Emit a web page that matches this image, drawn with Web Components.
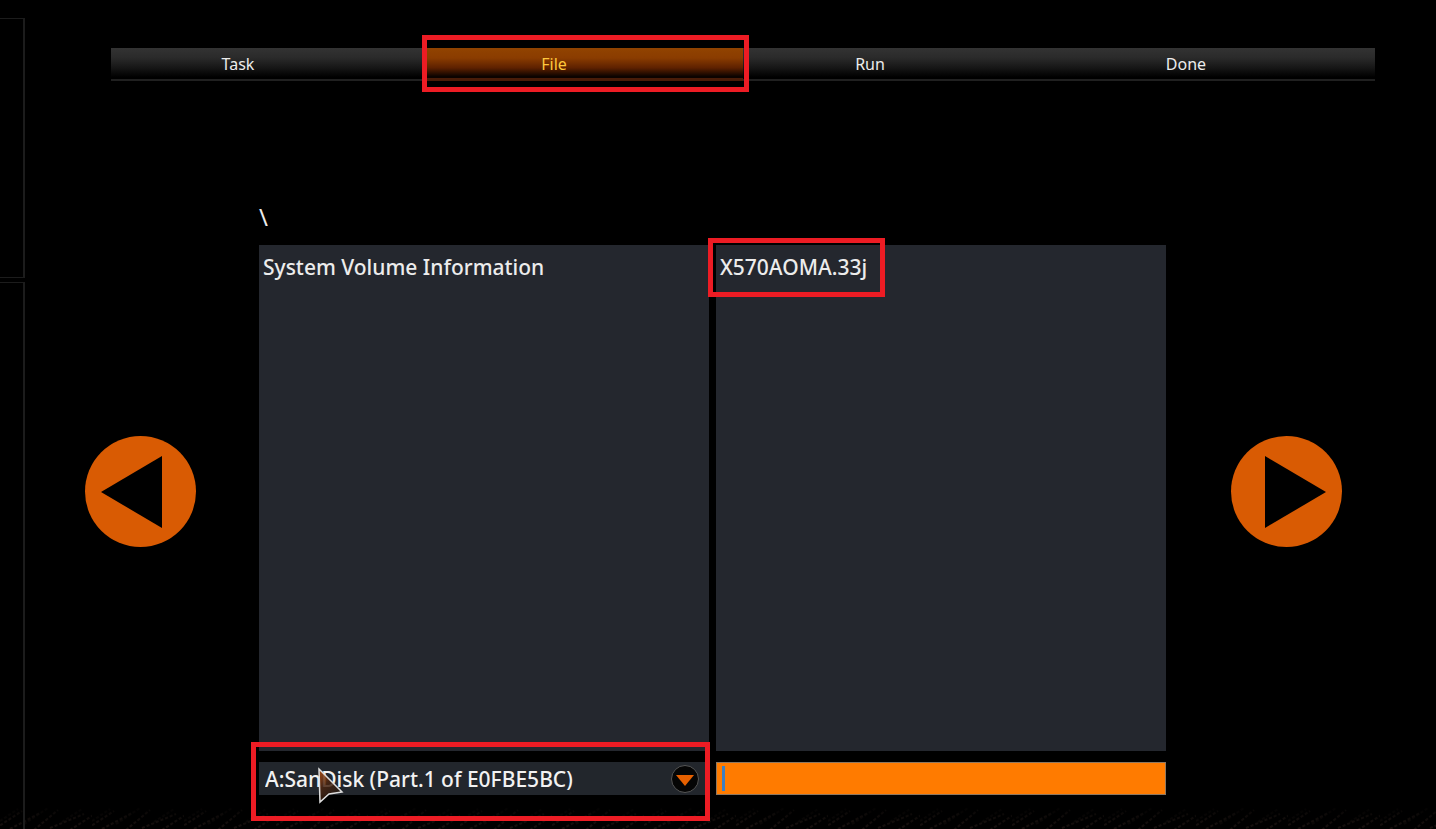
<!DOCTYPE html>
<html lang="en">
<head>
<meta charset="utf-8">
<meta name="viewport" content="width=device-width, initial-scale=1">
<title>Firmware update</title>
<style>
  html, body { margin: 0; background: #000; }
  body { font-family: "Noto Sans", "Open Sans", sans-serif; color: #ececec; }
</style>
</head>
<body>
<flash-page>
  <side-rail slot="rail"></side-rail>
  <step-bar slot="steps">
    <step-item>Task</step-item>
    <call-out style="--outset: -13px -6px -11px -5px"><step-item current>File</step-item></call-out>
    <step-item>Run</step-item>
    <step-item>Done</step-item>
  </step-bar>
  <round-button slot="prev" label="Previous step"></round-button>
  <file-browser>
    <span slot="path">\</span>
    <file-list slot="folders" label="Folders"><file-entry>System Volume Information</file-entry></file-list>
    <file-list slot="files" label="Files">
      <call-out style="--outset: -7px -14px -8px -8px"><file-entry>X570AOMA.33j</file-entry></call-out>
    </file-list>
    <call-out slot="drive" style="--outset: -20px -1px -26px -8px"><drive-select value="A:SanDisk (Part.1 of E0FBE5BC)"></drive-select></call-out>
    <name-field slot="name"></name-field>
  </file-browser>
  <round-button slot="next" label="Next step" forward></round-button>
</flash-page>

<script>
const define = (name, html, setup) => {
  const template = document.createElement('template');
  template.innerHTML = html;
  customElements.define(name, class extends HTMLElement {
    connectedCallback() {
      if (this.shadowRoot) return;
      this.attachShadow({ mode: 'open' }).append(template.content.cloneNode(true));
      if (setup) setup(this, this.shadowRoot);
    }
  });
};

define('flash-page', `
<style>
  :host { display: grid; grid-template-columns: 25px minmax(0, 1fr); min-height: 100vh; position: relative; isolation: isolate; overflow: hidden; }
  .texture { position: absolute; z-index: -1; left: 0; bottom: 0; width: 100%; height: 32px; }
  main { display: flex; flex-direction: column; }
  header { padding: 48px 61px 0 86px; }
  .stage { flex: 1; display: grid; grid-template-columns: 174px minmax(0, 1fr) 176px; align-items: center; margin-top: 107px; padding: 0 94px 34px 60px; }
  .body { align-self: stretch; display: grid; }
  .next { justify-self: end; }
</style>
<slot name="rail"></slot>
<svg class="texture" aria-hidden="true">
  <defs>
    <pattern id="mesh" width="92" height="32" patternUnits="userSpaceOnUse">
      <g fill="none" stroke="#3a2a24" stroke-width="2" stroke-dasharray="3 2" opacity=".5">
        <path d="M-4 31 22 14M10 32 40 16M34 33 58 13M50 31 84 17M70 33 98 15"/>
        <path d="M0 24 18 12M24 27 48 11M62 25 82 12" opacity=".5"/>
      </g>
    </pattern>
    <linearGradient id="rise" x2="0" y2="1"><stop stop-color="#000"/><stop offset="1" stop-color="#000" stop-opacity=".2"/></linearGradient>
  </defs>
  <rect width="100%" height="32" fill="url(#mesh)"/>
  <rect width="100%" height="32" fill="url(#rise)"/>
</svg>
<main>
  <header><slot name="steps"></slot></header>
  <div class="stage">
    <div><slot name="prev"></slot></div>
    <div class="body"><slot></slot></div>
    <div class="next"><slot name="next"></slot></div>
  </div>
</main>`);

define('side-rail', `
<style>
  :host { display: flex; flex-direction: column; gap: 4px; padding-top: 18px; }
  div { border: solid #1c1c1c; border-width: 1px 2px 1px 0; box-sizing: border-box; }
  .upper { height: 260px; }
  .lower { flex: 1; border-bottom: 0; }
</style>
<div class="upper"></div><div class="lower"></div>`);

define('step-bar', `
<style>
  :host { display: grid; grid-template-columns: repeat(4, minmax(0, 1fr)); background: linear-gradient(#333 0, #2a2a2a 30%, #161616 60%, #000 88%, #000 94%, #202020 94%); }
</style>
<slot></slot>`, el => el.setAttribute('role', 'list'));

define('step-item', `
<style>
  :host { display: block; box-sizing: border-box; height: 33px; padding-right: 62px; font-size: 16px; line-height: 33px; text-align: center; }
  :host([current]) { color: #ffc83c; background: linear-gradient(#914300 0, #8a3c00 30%, #5e2100 60%, #0c0300 86%, #0c0300 92%, #4a1c08 92%); }
</style>
<slot></slot>`, el => {
  el.setAttribute('role', 'listitem');
  if (el.hasAttribute('current')) el.setAttribute('aria-current', 'step');
});

define('call-out', `
<style>
  :host { display: block; position: relative; }
  .frame { position: absolute; z-index: 2; inset: var(--outset); border: 5px solid #ed1c24; pointer-events: none; }
</style>
<slot></slot><div class="frame"></div>`);

define('round-button', `
<style>
  :host { display: block; width: 111px; height: 111px; }
  button { display: block; width: 100%; height: 100%; padding: 0; border: 0; border-radius: 50%; background: none; cursor: pointer; }
  svg { display: block; width: 100%; height: 100%; }
  :host([forward]) svg { transform: scaleX(-1); }
</style>
<button type="button"><svg viewBox="0 0 111 111" aria-hidden="true"><circle cx="55.5" cy="55.5" r="55.5" fill="#d95b03"/><path d="M16 56 77 20V92Z" fill="#000"/></svg></button>`,
(el, root) => root.querySelector('button').setAttribute('aria-label', el.getAttribute('label')));

define('file-browser', `
<style>
  :host { display: grid; grid-template-columns: repeat(2, minmax(0, 1fr)); grid-template-rows: 57px minmax(200px, 1fr) 11px 33px; column-gap: 7px; font-weight: 500; }
  .path { grid-column: 1 / -1; font-size: 24px; line-height: 58px; font-weight: 400; }
  .drive, .name { grid-row: 4; }
  .list { display: grid; min-width: 0; }
</style>
<div class="path"><slot name="path"></slot></div>
<div class="list"><slot name="folders"></slot></div>
<div class="list"><slot name="files"></slot></div>
<div class="drive"><slot name="drive"></slot></div>
<div class="name"><slot name="name"></slot></div>`);

define('file-list', `
<style>
  :host { display: flex; flex-direction: column; align-items: flex-start; background: #24272e; }
</style>
<slot></slot>`, el => {
  el.setAttribute('role', 'group');
  el.setAttribute('aria-label', el.getAttribute('label'));
});

define('file-entry', `
<style>
  :host { display: block; }
  button { display: block; height: 44px; padding: 0 4px; border: 0; background: none; color: inherit; font: inherit; font-size: 21px; line-height: 44px; white-space: nowrap; cursor: pointer; }
</style>
<button type="button"><slot></slot></button>`);

define('drive-select', `
<style>
  :host { display: block; position: relative; }
  select { display: block; width: 100%; height: 33px; box-sizing: border-box; appearance: none; margin: 0; padding: 2px 44px 0 6px; border: 0; border-radius: 0; background: #22262c; color: #f2f2f2; font: inherit; font-size: 21px; line-height: 31px; }
  .knob { position: absolute; right: 9px; top: 2px; width: 30px; height: 30px; pointer-events: none; }
  .pointer { position: absolute; left: 58px; top: 5px; width: 28px; height: 38px; pointer-events: none; }
</style>
<select aria-label="Drive"><option></option></select>
<svg class="knob" viewBox="0 0 30 30" aria-hidden="true"><circle cx="15" cy="15" r="13.5" fill="#050505" stroke="#555"/><path d="M6 11H24L15 22Z" fill="#e66000"/></svg>
<svg class="pointer" viewBox="0 0 28 38" aria-hidden="true">
  <defs><linearGradient id="tip" x2=".7" y2="1"><stop offset=".1" stop-color="#a84a10"/><stop offset=".45" stop-color="#4a2410"/><stop offset="1" stop-color="#1c1713"/></linearGradient></defs>
  <path d="M2 2 25 25 12 27 3 35Z" fill="url(#tip)" fill-opacity=".85" stroke="#ddd" stroke-width="1.5"/>
</svg>`, (el, root) => { root.querySelector('option').textContent = el.getAttribute('value'); });

define('name-field', `
<style>
  :host { display: block; }
  input { display: block; width: 100%; height: 33px; box-sizing: border-box; margin: 0; padding: 0 8px; border: 1px solid #8f7860; border-radius: 0; outline: 0; font: inherit; font-size: 21px; color: #fff;
    background: linear-gradient(#3d7fc0, #3d7fc0) 5px 3px / 3px 25px no-repeat #ff7b00; }
</style>
<input type="text" aria-label="File name">`);
</script>
</body>
</html>
